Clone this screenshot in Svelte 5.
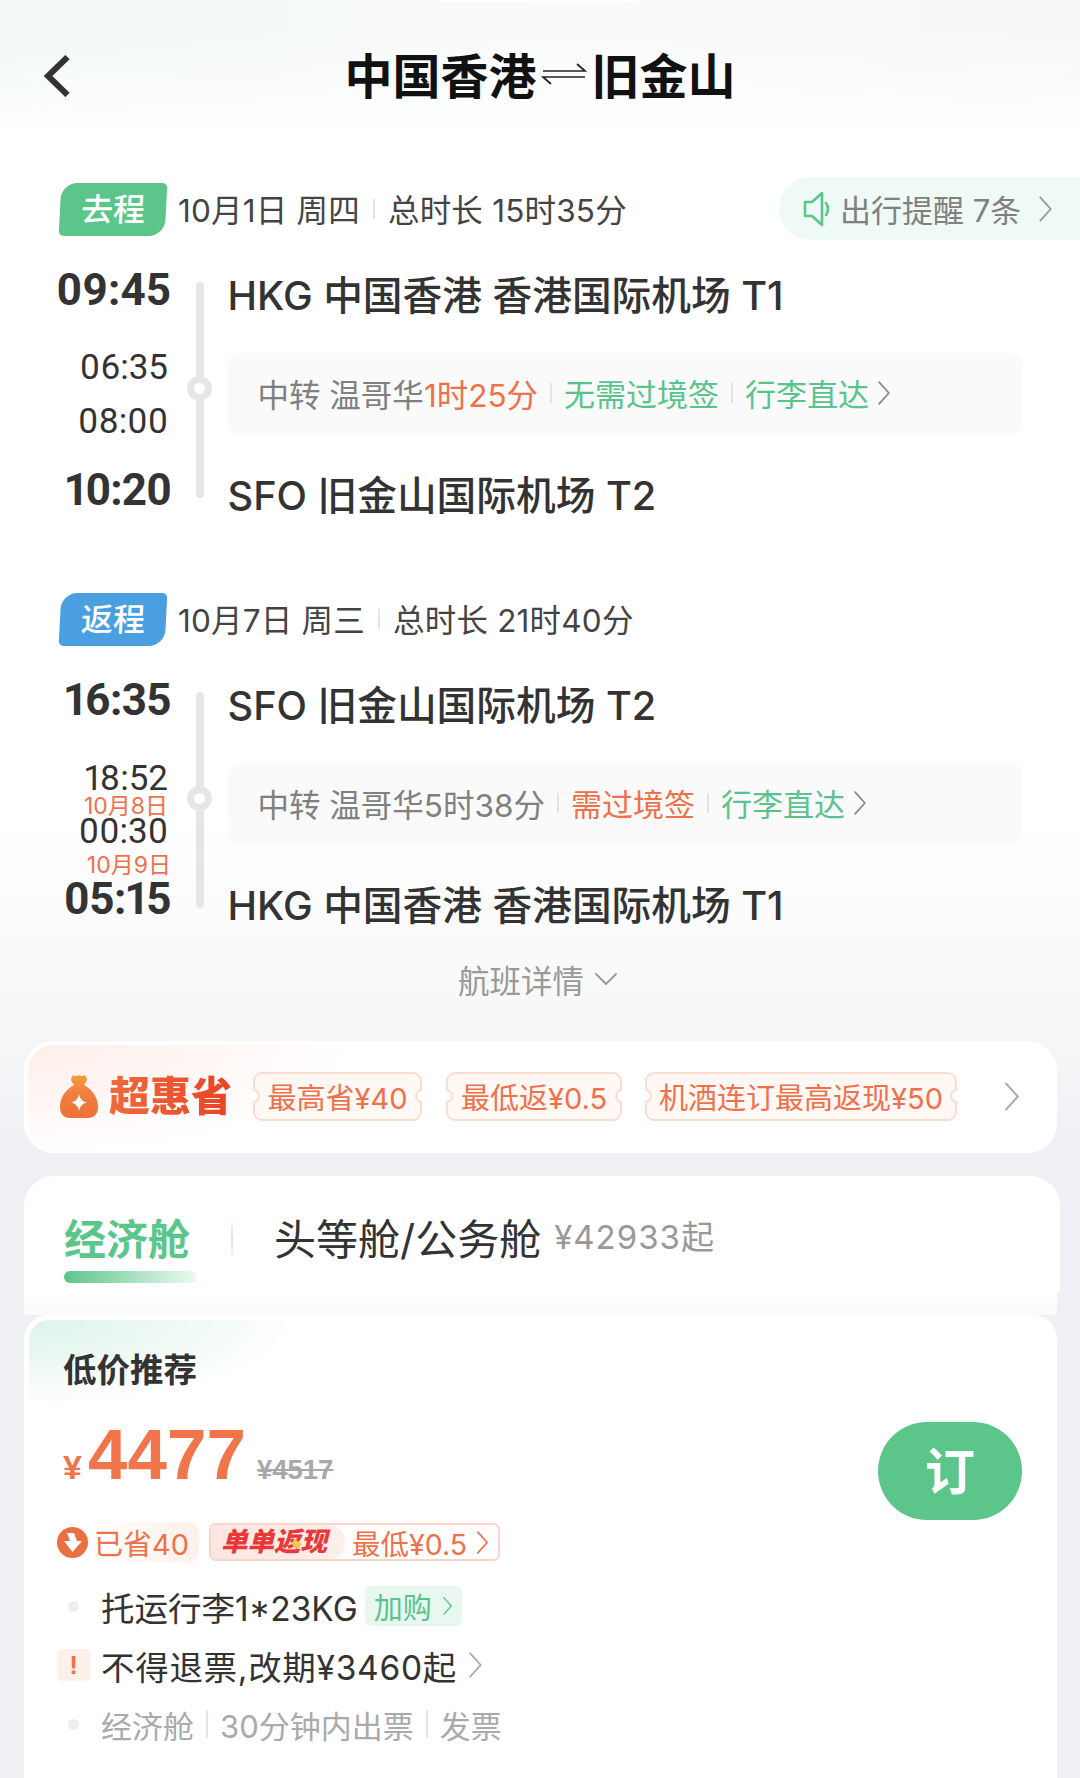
{#snippet chev(cls)}
  <svg class={cls} viewBox="0 0 12 24" fill="none" stroke="currentColor" stroke-width="1.6" stroke-linecap="round" stroke-linejoin="round"><path d="M1.5 2 L10.5 12 L1.5 22"/></svg>
{/snippet}

<div class="page">
  <div class="notch"></div>
  <header class="top">
    <svg class="back" viewBox="0 0 27 42" fill="none" stroke="#333" stroke-width="6" stroke-linejoin="miter"><path d="M24.5 2 L5 21 L24.5 40"/></svg>
    <h1>中国香港<svg class="swap" viewBox="0 0 46 24" fill="none" stroke="#222" stroke-width="1.7"><path d="M2 9 H44 L36 2"/><path d="M44 15 H2 L10 22"/></svg>旧金山</h1>
    <span></span>
  </header>

  <section class="seg">
    <div class="head">
      <span class="tag green">去程</span>
      <span class="hd">10月1日 周四</span><i class="hsep"></i><span class="hd">总时长 15时35分</span>
      <div class="pill">
        <svg class="spk" viewBox="0 0 28 38" fill="none" stroke="#5cc58a" stroke-width="2.6" stroke-linejoin="round"><path d="M2 12 H9 L19 3 V35 L9 26 H2 Z"/><path d="M23 13 Q27 19 23 25" stroke-linecap="round"/></svg>
        <span>出行提醒 7条</span>
        {@render chev('pchev')}
      </div>
    </div>
    <div class="route">
      <div class="times">
        <b>09:45</b>
        <span class="mt38">06:35</span>
        <span class="mt20">08:00</span>
        <b class="mt30 ls1">10:20</b>
      </div>
      <div class="track"><i class="dot"></i></div>
      <div class="info">
        <div class="apt">HKG 中国香港 香港国际机场 T1</div>
        <div class="transit">
          <span>中转 温哥华</span><em>1时25分</em><i class="sep"></i><u>无需过境签</u><i class="sep"></i><u>行李直达</u>{@render chev('tchev')}
        </div>
        <div class="apt">SFO 旧金山国际机场 T2</div>
      </div>
    </div>
  </section>

  <section class="seg seg2">
    <div class="head">
      <span class="tag blue">返程</span>
      <span class="hd">10月7日 周三</span><i class="hsep"></i><span class="hd">总时长 21时40分</span>
    </div>
    <div class="route">
      <div class="times">
        <b class="ls2">16:35</b>
        <span class="mt39">18:52</span>
        <small class="d1">10月8日</small>
        <span class="tight">00:30</span>
        <small class="d2">10月9日</small>
        <b class="ls2">05:15</b>
      </div>
      <div class="track"><i class="dot"></i></div>
      <div class="info">
        <div class="apt">SFO 旧金山国际机场 T2</div>
        <div class="transit">
          <span>中转 温哥华5时38分</span><i class="sep"></i><em class="ne">需过境签</em><i class="sep"></i><u>行李直达</u>{@render chev('tchev')}
        </div>
        <div class="apt">HKG 中国香港 香港国际机场 T1</div>
      </div>
    </div>
  </section>

  <div class="more">航班详情<svg viewBox="0 0 24 14" fill="none" stroke="#999" stroke-width="1.8" stroke-linecap="round" stroke-linejoin="round"><path d="M2 2 L12 12 L22 2"/></svg></div>

  <div class="super">
    <svg class="bag" viewBox="0 0 38 44">
      <defs><linearGradient id="bg" x1="0.5" y1="0" x2="0.5" y2="1"><stop offset="0" stop-color="#f2a035"/><stop offset="0.4" stop-color="#f08040"/><stop offset="1" stop-color="#ee7039"/></linearGradient></defs>
      <path fill="url(#bg)" d="M13 1 Q16 3 19 1 Q22 3 25 1 L27 5 Q27 8 24 11 C33 16 38 24 38 33 C38 40 34 44 28 44 H10 C4 44 0 40 0 33 C0 24 5 16 14 11 Q11 8 11 5 Z"/>
      <path fill="#fff" d="M19 20 Q20 27 27 28.500 Q20 30 19 37 Q18 30 11 28.500 Q18 27 19 20 Z"/>
    </svg>
    <span class="brand">超惠省</span>
    <span class="ticket t1">最高省¥40</span>
    <span class="ticket t2">最低返¥0.5</span>
    <span class="ticket t3">机酒连订最高返现¥50</span>
    {@render chev('schev')}
  </div>

  <div class="cabin">
    <div class="tabs">
      <div class="tab-on">经济舱<i></i></div>
      <i class="tdiv"></i>
      <div class="tab-off">头等舱/公务舱</div>
      <div class="tab-price">¥42933起</div>
    </div>
    <div class="band"></div>
    <div class="offer">
      <div class="lab">低价推荐</div>
      <div class="price-row">
        <div class="price"><span class="yen">¥</span><span class="num">4477</span><s>¥4517</s></div>
        <div class="book">订</div>
      </div>
      <div class="badges">
        <div class="saved">
          <svg viewBox="0 0 31 31"><circle cx="15.500" cy="15.500" r="15.500" fill="#ec6f3f"/><path fill="#fff" d="M10 6 L17 6 L20 14 L25 14 L15.500 25 L7 14 L13 14 Z"/></svg>
          <span>已省40</span>
        </div>
        <div class="cash">
          <span class="cash-l">单单返现<i class="spark"></i></span>
          <span class="cash-r">最低¥0.5</span>
          {@render chev('cchev')}
        </div>
      </div>
      <div class="line l1">
        <span class="slot"><i class="bul"></i></span>
        <span class="txt">托运行李1*23KG</span>
        <span class="buy">加购{@render chev('bchev')}</span>
      </div>
      <div class="line l2">
        <span class="slot"><i class="warn">!</i></span>
        <span class="txt wide">不得退票,改期¥3460起</span>
        {@render chev('rchev')}
      </div>
      <div class="line l3">
        <span class="slot"><i class="bul"></i></span>
        <span class="gr">经济舱</span><i class="gsep"></i><span class="gr">30分钟内出票</span><i class="gsep"></i><span class="gr">发票</span>
      </div>
    </div>
  </div>
</div>

<style>
  :global(body) { margin: 0; }
  .page {
    position: relative;
    width: 1080px;
    height: 1778px;
    overflow: hidden;
    font-family: Inter, "Noto Sans CJK SC", sans-serif;
    color: #333;
    background:
      linear-gradient(100deg, rgba(236, 246, 241, 0.75) 0%, rgba(244, 246, 246, 0.5) 50%, rgba(245, 244, 246, 0.7) 100%) top / 100% 140px no-repeat,
      linear-gradient(180deg, #fff 0, #fff 815px, #fafafa 950px, #f6f7f8 1020px, #eff0f4 1160px);
  }
  .page::before {
    content: "";
    position: absolute;
    left: 0; right: 0; top: 0; height: 140px;
    background: linear-gradient(180deg, rgba(255,255,255,0) 20%, #fff 100%);
  }
  .notch { position: absolute; left: 441px; top: 0; width: 196px; height: 2px; background: #fff; border-radius: 0 0 6px 6px; }
  i, em, u { font-style: normal; text-decoration: none; }
  .top {
    position: relative;
    height: 148px;
    display: grid;
    grid-template-columns: 1fr auto 1fr;
    align-items: center;
  }
  .back { width: 27px; height: 42px; margin-left: 43px; margin-top: 4px; }
  h1 {
    margin: -3px 0 0;
    display: flex;
    align-items: center;
    font: 700 48px/1 "Noto Sans CJK SC", sans-serif;
    color: #111;
  }
  .swap { width: 46px; height: 24px; margin: 2px 5px 0 4px; }

  .seg { margin-top: 29px; }
  .seg2 { margin-top: 67px; }
  .head { display: flex; align-items: center; height: 63px; padding-left: 60px; }
  .tag {
    width: 106px; height: 53px;
    display: flex; align-items: center; justify-content: center;
    color: #fff;
    font-size: 32px;
    font-weight: 500;
    line-height: 50px;
    border-radius: 16px 5px 16px 5px;
    transform: skewX(-3deg);
    margin-right: 12px;
    margin-top: 1px;
  }
  .green { background: #5cc58a; }
  .blue { background: #4a9fe0; }
  .hd { font-size: 31.500px; letter-spacing: 0.2px; color: #444; margin-top: -1px; white-space: nowrap; }
  .hsep { width: 2px; height: 20px; background: #e4e4e4; margin: 0 13px; }
  .pill {
    margin-left: auto;
    width: 301px; height: 63px;
    flex: none;
    box-sizing: border-box;
    display: flex; align-items: center;
    padding-left: 24px;
    background: #eff9f5;
    border-radius: 32px 0 0 32px;
    color: #808080;
    font-size: 31px;
    white-space: nowrap;
  }
  .spk { width: 28px; height: 38px; margin-right: 9px; }
  .pchev { width: 15px; height: 28px; margin-left: 17px; color: #999; }

  .route { display: flex; height: 260px; margin-top: 20px; }
  .times {
    width: 171px; flex: none;
    display: flex; flex-direction: column; align-items: flex-end;
    padding-top: 8px;
    box-sizing: border-box;
    font-family: Roboto, sans-serif;
    font-variant-numeric: proportional-nums;
    font-feature-settings: "pnum" 1;
  }
  .times b { font-weight: 700; font-size: 44px; line-height: 44px; color: #333; }
  .times .ls1 { letter-spacing: -1px; }
  .times .ls2 { letter-spacing: -0.6px; }
  .times span { font-size: 35px; line-height: 34px; color: #333; padding-right: 3px; }
  .mt38 { margin-top: 39px; }
  .mt20 { margin-top: 20px; }
  .mt30 { margin-top: 29px; }
  .mt39 { margin-top: 40px; }
  .times .tight { line-height: 30px; }
  .times small {
    font-family: Inter, "Noto Sans CJK SC", sans-serif;
    font-size: 23px; line-height: 22px; color: #f0704a;
    white-space: nowrap;
  }
  .d1 { padding-right: 3px; margin-top: -1px; }
  .d2 { padding-right: 0; margin-top: 7px; margin-bottom: 1px; }
  .track {
    position: relative;
    flex: none;
    width: 7.500px; height: 216px;
    margin: 22px 24px 0 25px;
    background: #e6e6e6;
    border-radius: 4px;
  }
  .dot {
    position: absolute;
    left: -9px; top: 94px;
    width: 25px; height: 25px;
    box-sizing: border-box;
    border: 7px solid #e6e6e6;
    border-radius: 50%;
    background: #fff;
  }
  .info { width: 795px; flex: none; padding-top: 12px; }
  .apt { font-size: 39.700px; line-height: 48px; font-weight: 500; color: #333; white-space: nowrap; }
  .transit {
    height: 82px;
    margin: 33px 0 37px;
    padding: 0 0 3px 30px;
    box-sizing: border-box;
    display: flex; align-items: center;
    background: #fafafa;
    border-radius: 14px;
    font-size: 31.500px;
    color: #808080;
    white-space: nowrap;
  }
  .transit em { color: #f0704a; }
  .transit .ne { font-size: 31px; }
  .transit u { color: #58c48c; font-size: 31px; }
  .sep { width: 2px; height: 20px; background: #e4e4e4; margin: 0 12px; }
  .tchev { width: 14px; height: 26px; margin-left: 8px; color: #888; }

  .more {
    height: 60px;
    margin-top: 19px;
    padding-right: 4px;
    display: flex; align-items: center; justify-content: center;
    font-size: 31.500px;
    color: #999;
  }
  .more svg { width: 24px; height: 14px; margin-left: 10px; }

  .super {
    position: relative;
    margin: 32px 0 23px 24px;
    width: 1033px; height: 112px;
    padding-bottom: 2px;
    box-sizing: border-box;
    display: flex; align-items: center;
    background: #fff;
    border-radius: 30px;
    overflow: hidden;
  }
  .super::before {
    content: "";
    position: absolute;
    left: 4px; top: 4px; width: 320px; height: 108px;
    border-radius: 26px 0 0 0;
    background: radial-gradient(ellipse at 0 0, #feeeea 0%, rgba(255,255,255,0) 72%);
  }
  .bag { position: relative; width: 38px; height: 44px; margin-left: 36px; }
  .brand {
    position: relative;
    margin-left: 11px;
    width: 122px;
    font-size: 41px; font-weight: 900; line-height: 46px;
    background: linear-gradient(90deg, #f06a3c, #ea4324);
    -webkit-background-clip: text;
    background-clip: text;
    color: transparent;
    white-space: nowrap;
  }
  .ticket {
    position: relative;
    height: 49px;
    box-sizing: border-box;
    display: flex; align-items: center; justify-content: center;
    border: 2px solid #fbdcd1;
    border-radius: 9px;
    background: #fff8f5;
    color: #f0704a;
    font-size: 29px;
    white-space: nowrap;
  }
  .ticket::before, .ticket::after {
    content: "";
    position: absolute;
    top: 50%;
    width: 14px; height: 14px;
    margin-top: -7px;
    box-sizing: border-box;
    border: 2px solid #fbdcd1;
    border-radius: 50%;
    background: #fff;
  }
  .ticket::before { left: -9px; clip-path: inset(0 0 0 50%); }
  .ticket::after { right: -9px; clip-path: inset(0 50% 0 0); }
  .t1 { width: 169px; margin-left: 22px; }
  .t2 { width: 176px; margin-left: 24px; }
  .t3 { width: 312px; margin-left: 23px; }
  .schev { width: 18px; height: 31px; margin-left: 46px; color: #aaa; position: relative; }

  .cabin { margin-left: 24px; width: 1036px; }
  .tabs {
    height: 116px;
    display: flex; align-items: flex-start;
    background: #fff;
    border-radius: 30px 30px 0 0;
    padding-left: 40px;
    box-sizing: border-box;
  }
  .tab-on {
    position: relative;
    width: 134px;
    margin-top: 39px;
    font-size: 42px; font-weight: 700; line-height: 50px;
    color: #5cc58a;
    white-space: nowrap;
  }
  .tab-on i {
    position: absolute;
    left: 0; top: 56px;
    width: 133px; height: 12px;
    border-radius: 6px;
    background: linear-gradient(90deg, #5cc58a, rgba(92, 197, 138, 0.1));
  }
  .tdiv {
    width: 2px; height: 42px; margin: 42px 41px 0 33px;
    background: linear-gradient(180deg, #fff, #ddd 50%, #fff);
  }
  .tab-off { margin-top: 39px; font-size: 42px; line-height: 50px; color: #333; white-space: nowrap; }
  .tab-price { margin: 41px 0 0 13px; font-size: 33px; letter-spacing: 1px; line-height: 40px; color: #999; white-space: nowrap; }
  .band { width: 1033px; height: 23px; background: linear-gradient(180deg, #fff, #fafafb); }
  .offer {
    position: relative;
    width: 1033px;
    height: 470px;
    background: #fff;
    border-radius: 24px 24px 0 0;
  }
  .offer::before {
    content: "";
    position: absolute;
    left: 5px; top: 5px; width: 270px; height: 85px;
    border-radius: 20px 0 0 0;
    background: radial-gradient(ellipse at 0 0, #dcf3e8 0%, rgba(255,255,255,0) 72%);
  }
  .lab { position: relative; padding: 33px 0 0 39px; font-size: 33.500px; line-height: 44px; font-weight: 700; color: #333; }
  .price-row { position: relative; display: flex; justify-content: space-between; align-items: flex-start; height: 130px; }
  .price { display: flex; align-items: baseline; margin: 25px 0 0 39px; font-family: "Liberation Sans", sans-serif; }
  .yen { font-size: 34px; font-weight: 700; color: #f0754a; margin-right: 6px; }
  .num { font-size: 71px; font-weight: 700; color: #f0754a; line-height: 76px; }
  s { margin-left: 11px; font-size: 27.500px; font-weight: 700; color: #a8a8a8; }
  .book {
    width: 144px; height: 98px;
    margin: 30px 35px 0 0;
    padding-bottom: 6px;
    box-sizing: border-box;
    display: flex; align-items: center; justify-content: center;
    background: #5cc58a; border-radius: 49px;
    color: #fff; font-size: 50px; font-weight: 700;
  }
  .badges { display: flex; align-items: center; margin-left: 33px; height: 40px; }
  .saved {
    width: 142px; height: 40px;
    display: flex; align-items: center;
    border-radius: 10px;
    background: linear-gradient(90deg, #fff 20%, #fdf0ea 100%);
    color: #f0704a; font-size: 29px;
    white-space: nowrap;
  }
  .saved svg { width: 31px; height: 31px; margin-right: 6px; flex: none; }
  .cash {
    display: flex; align-items: center;
    width: 291px; height: 38px;
    margin-left: 10px;
    box-sizing: border-box;
    border: 2px solid #fbd5c8;
    border-radius: 7px;
    color: #f0704a;
    white-space: nowrap;
  }
  .cash-l {
    position: relative;
    width: 134px; height: 34px;
    box-sizing: border-box;
    padding-left: 10px;
    background: linear-gradient(90deg, #fde6e2, #fcefec);
    border-radius: 5px 16px 16px 5px;
    color: #e8383a;
    font-size: 26.500px; line-height: 33px; font-weight: 900; font-style: italic;
  }
  .spark {
    position: absolute;
    left: 81px; top: 16px;
    width: 9px; height: 6px;
    background: #f6c84e;
    transform: rotate(35deg);
  }
  .cash-r { margin-left: 7px; font-size: 28.500px; }
  .cchev { width: 13px; height: 25px; margin-left: 9px; }
  .line { display: flex; align-items: center; white-space: nowrap; }
  .slot { width: 44px; margin-left: 33px; display: flex; flex: none; }
  .bul { width: 11px; height: 11px; border-radius: 50%; background: #eeeeee; margin-left: 11px; }
  .l1 { height: 40px; margin-top: 24px; }
  .l2 { height: 34px; margin-top: 22px; }
  .l3 { height: 40px; margin-top: 22px; }
  .txt { font-size: 33.500px; color: #333; }
  .wide { letter-spacing: 0.7px; }
  .buy {
    display: flex; align-items: center;
    width: 97px; height: 40px;
    margin-left: 7px;
    padding-left: 9px;
    box-sizing: border-box;
    background: #e8f7f0;
    border-radius: 6px;
    color: #58c48c;
    font-size: 29px;
  }
  .bchev { width: 11px; height: 20px; margin-left: 10px; }
  .warn {
    width: 33px; height: 32px;
    display: flex; align-items: center; justify-content: center;
    background: #fdf0ea;
    border-radius: 5px;
    color: #f0704a;
    font-weight: 700;
    font-size: 26px;
    font-family: "Liberation Sans", sans-serif;
  }
  .rchev { width: 15px; height: 28px; margin-left: 11px; color: #aaa; }
  .gr { font-size: 31px; color: #aaa; }
  .gsep { width: 2px; height: 28px; background: #e4e4e4; margin: 0 12px; }
</style>
